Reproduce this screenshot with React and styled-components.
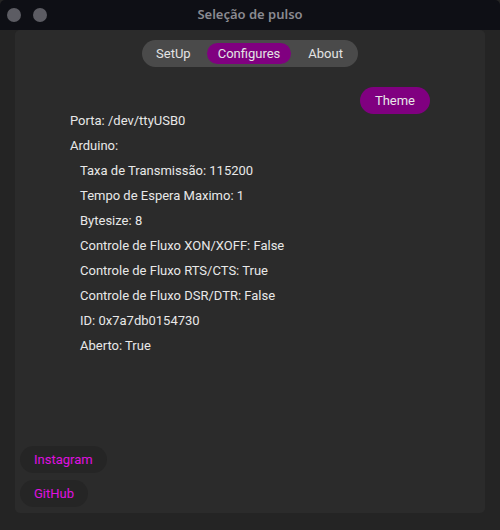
import React from "react";
import styled, { createGlobalStyle } from "styled-components";

const Global = createGlobalStyle`
  html, body { margin: 0; padding: 0; background: #242424; }
  body { width: 500px; height: 530px; overflow: hidden; font-family: Roboto, "Liberation Sans", sans-serif; }
`;

const Window = styled.div`
  width: 500px;
  height: 530px;
  display: flex;
  flex-direction: column;
  background: #242424;
`;

const TitleBar = styled.div`
  height: 30px;
  flex: none;
  background: #0e0f15;
  border-radius: 5px 5px 0 0;
  display: flex;
  align-items: center;
  position: relative;
  padding-left: 7px;
  gap: 12px;
`;

const Dot = styled.span`
  width: 14px;
  height: 14px;
  border-radius: 50%;
  background: #5c5c63;
`;

const Title = styled.div`
  position: absolute;
  left: 0;
  right: 0;
  top: 0;
  bottom: 0;
  display: flex;
  align-items: center;
  justify-content: center;
  font-family: "Noto Sans", "Open Sans", sans-serif;
  font-weight: 600;
  font-size: 13px;
  color: #8a8a91;
  padding-bottom: 2px;
`;

const Panel = styled.div`
  margin: 0 15px;
  height: 483px;
  background: #2b2b2b;
  border-radius: 5px;
  display: flex;
  flex-direction: column;
  padding: 10px 5px 6px;
  box-sizing: border-box;
`;

const Tabs = styled.div`
  align-self: center;
  display: flex;
  gap: 5px;
  padding: 3px;
  background: #4a4a4a;
  border-radius: 14px;
  height: 27px;
  box-sizing: border-box;
`;

const Tab = styled.div`
  padding: 0 ${(p) => p.$pad}px;
  height: 21px;
  display: flex;
  align-items: center;
  border-radius: 11px;
  font-size: 13px;
  color: #e4e4e4;
  background: ${(p) => (p.$active ? "#800080" : "transparent")};
`;

const ThemeRow = styled.div`
  display: flex;
  justify-content: flex-end;
  padding-right: 50px;
  margin-top: 20px;
  margin-bottom: -1px;
`;

const PillButton = styled.div`
  height: 27px;
  padding: 0 ${(p) => p.$pad}px;
  display: flex;
  align-items: center;
  border-radius: 14px;
  font-size: 13px;
  background: ${(p) => p.$bg};
  color: ${(p) => p.$fg};
`;

const Info = styled.div`
  display: flex;
  flex-direction: column;
  gap: 9px;
  padding-left: 50px;
`;

const Line = styled.div`
  font-size: 13px;
  line-height: 16px;
  color: #e8e8e8;
  padding-left: ${(p) => (p.$indent ? 10 : 0)}px;
`;

const Footer = styled.div`
  margin-top: auto;
  display: flex;
  flex-direction: column;
  align-items: flex-start;
  gap: 7px;
`;

const lines = [
  ["Porta: /dev/ttyUSB0", false],
  ["Arduino:", false],
  ["Taxa de Transmissão: 115200", true],
  ["Tempo de Espera Maximo: 1", true],
  ["Bytesize: 8", true],
  ["Controle de Fluxo XON/XOFF: False", true],
  ["Controle de Fluxo RTS/CTS: True", true],
  ["Controle de Fluxo DSR/DTR: False", true],
  ["ID: 0x7a7db0154730", true],
  ["Aberto: True", true],
];

export default function App() {
  return (
    <Window>
      <Global />
      <TitleBar>
        <Dot />
        <Dot />
        <Title>Seleção de pulso</Title>
      </TitleBar>
      <Panel>
        <Tabs>
          <Tab $pad={11}>SetUp</Tab>
          <Tab $pad={11} $active>Configures</Tab>
          <Tab $pad={12}>About</Tab>
        </Tabs>
        <ThemeRow>
          <PillButton $pad={15} $bg="#800080" $fg="#e8e8e8">Theme</PillButton>
        </ThemeRow>
        <Info>
          {lines.map(([t, ind]) => (
            <Line key={t} $indent={ind}>{t}</Line>
          ))}
        </Info>
        <Footer>
          <PillButton $pad={14} $bg="#252525" $fg="#e010e0">Instagram</PillButton>
          <PillButton $pad={14} $bg="#252525" $fg="#e010e0">GitHub</PillButton>
        </Footer>
      </Panel>
    </Window>
  );
}
